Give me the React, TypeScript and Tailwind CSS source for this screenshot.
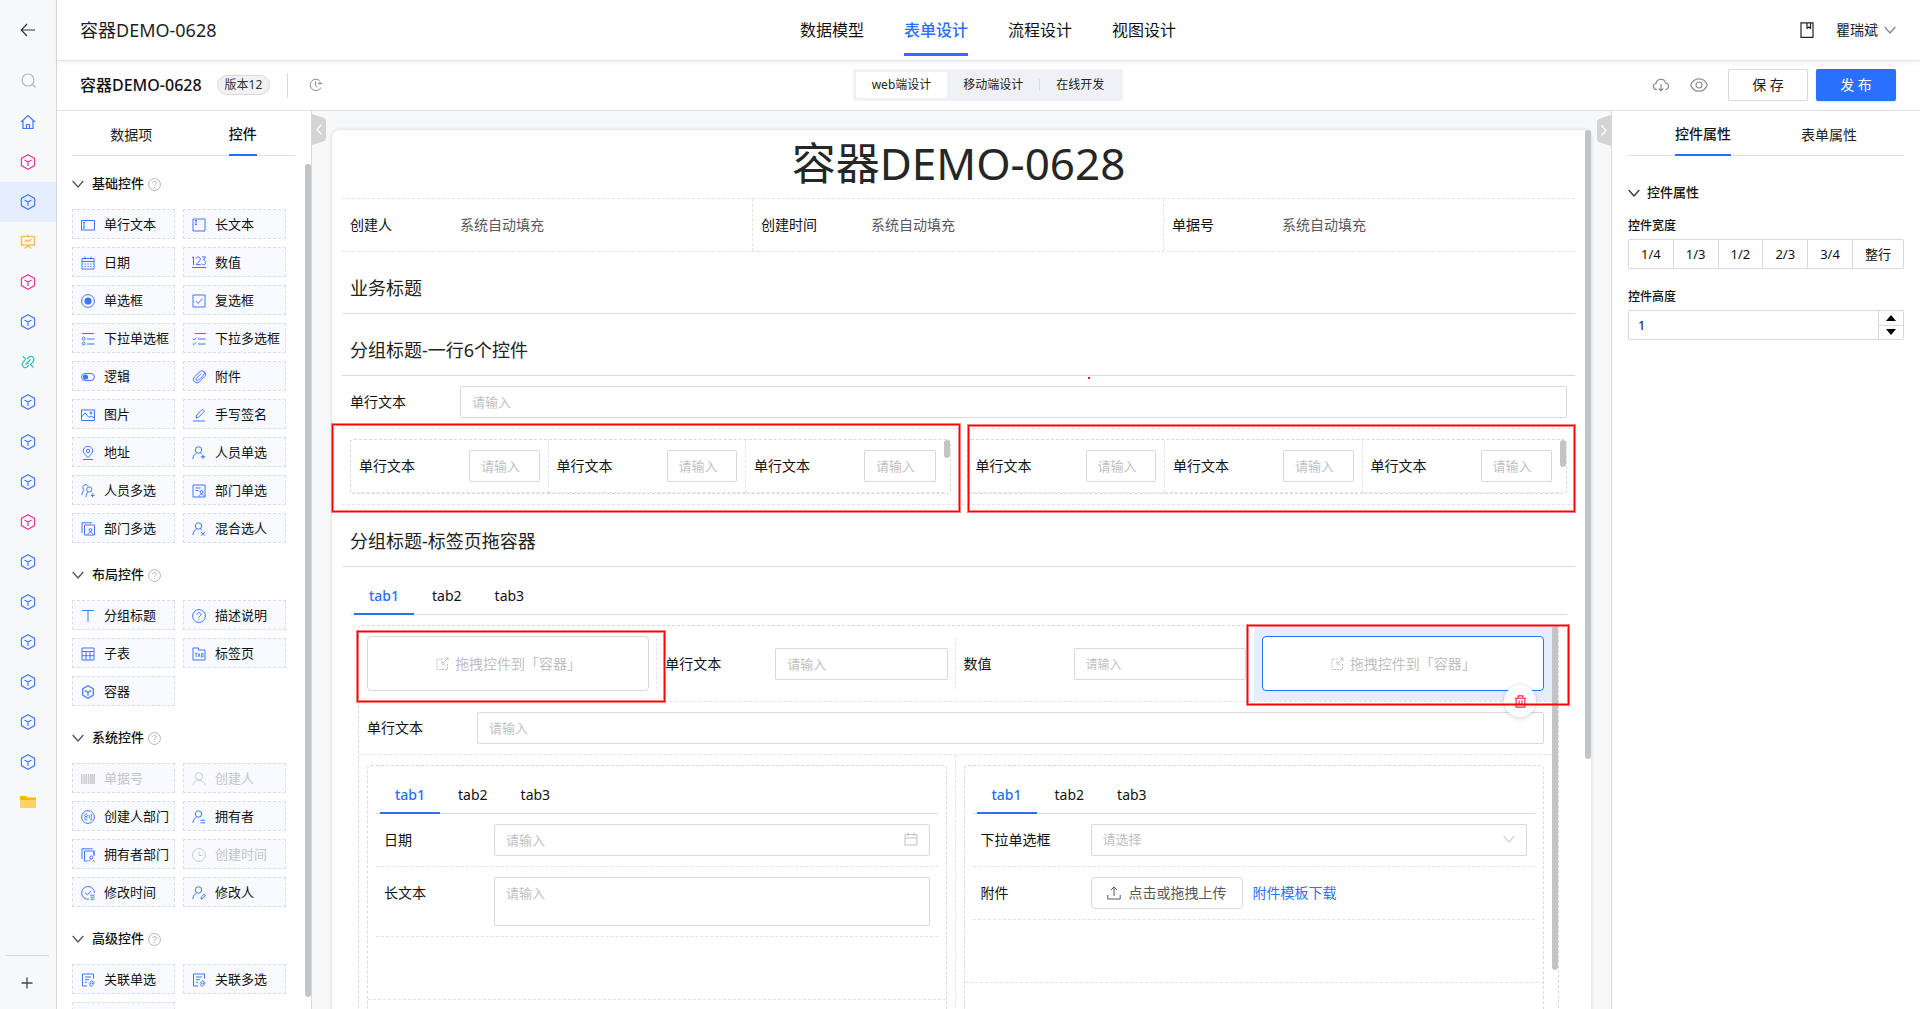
import { useId, type ReactNode } from "react";

/* ---------- icons ---------- */

function Svg({ size = 14, box = 14, w = 1, className = "", children }: { size?: number; box?: number; w?: number; className?: string; children: ReactNode }) {
  return (
    <svg width={size} height={size} viewBox={`0 0 ${box} ${box}`} fill="none" stroke="currentColor" strokeWidth={w} className={`shrink-0 ${className}`} aria-hidden="true">
      {children}
    </svg>
  );
}

const person = (
  <>
    <circle cx="6.5" cy="4" r="3.2" />
    <path d="M4.6 7C2.6 8 1.2 10 .8 13" />
  </>
);

const glyphs: Record<string, ReactNode> = {
  input: (<><path d="M.5 2.5h13v9.500H.5z" /><path d="M3 4.500v5.500M2 4.500h2M2 10h2" /></>),
  textarea: (<><path d="M1 1h12v12H1z" /><path d="M4 2.500v4M3 2.500h2M3 6.500h2" /></>),
  date: (<><path d="M1 2.500h12v10.500H1zM1 5.500h12M4 .5v3M10 .5v3" /><path d="M3.500 8h1.500M6.300 8h1.500M9 8h1.500M3.500 10.500h1.500M6.300 10.500h1.500M9 10.500h1.500" /></>),
  number: (<><path d="M0 1.500 1.500.8V9M4 2.800C4.300.3 8.300.3 8.300 3 8.300 5 5.500 6.800 4.200 8.600H8.800M10 .9h3.500L11.500 4c2.900.2 2.500 4.800.2 4.800-.9 0-1.600-.4-1.900-1.200" /><path d="M0 11.500h14" /></>),
  radio: (<><circle cx="7" cy="7" r="6.400" /><circle cx="7" cy="7" r="3.600" fill="currentColor" stroke="none" /></>),
  check: (<><path d="M1 1h12v12H1z" /><path d="m3.800 7 2.400 2.400 4.200-4.600" /></>),
  selectOne: (<><path d="M1 1.500h12M6 7h7.500M6 12h7.500" /><circle cx="2.700" cy="6.600" r="1.400" /><circle cx="2.700" cy="11.500" r="1.400" /></>),
  selectMany: (<><path d="M3 1.500h11M6 7h7.500M6 12h7.500" /><path d="m.8 6.800 1.200 1.200 2-2.300M.8 11.500 2 12.700l2-2.300" /></>),
  toggle: (<><rect x=".6" y="3.500" width="12.800" height="7" rx="3.500" /><circle cx="4.500" cy="7" r="2.600" fill="currentColor" stroke="none" /></>),
  clip: <path d="M12.800 6.500 7.500 11.800a3.500 3.500 0 0 1-5-5L8 1.500a2.500 2.500 0 0 1 3.600 3.600L6.500 10.200a1.400 1.400 0 0 1-2-2l4.700-4.700M12.800 6.500a3 3 0 0 0-1-5" />,
  image: (<><path d="M.5 2h13v10.500H.5zM.5 9l3.500-4 4 4.500L10 8l3.500 2" /><circle cx="10" cy="5" r="1" /></>),
  pen: (<><path d="M4 10l.6-2.800L10.500 1.200l2 2-6 6zM1 13h12" /></>),
  pin: (<><path d="M7 11.500C4.200 8.800 2.300 7 2.300 4.900a4.700 4.700 0 0 1 9.400 0C11.700 7 9.800 8.800 7 11.500zM2 13.500h10" /><circle cx="7" cy="5" r="1.700" /></>),
  userAdd: (<>{person}<path d="M11 8.500v4.500M8.700 10.800h4.600M8.500 6.800 9.500 8" /></>),
  usersAdd: (<><path d="M3.300 5.800A2.700 2.700 0 1 1 7 2.500M3.300 5.800C2 7 1.200 8.500 1 11" /><circle cx="8.300" cy="5.500" r="2.600" /><path d="M7 7.800C5.800 9 5.200 10.500 5 13M11.700 9.300v4M9.700 11.300h4" /></>),
  dept: (<><path d="M1 1h12v12H1zM3.500 4h5M3.500 6.500h3" /><circle cx="9.500" cy="8" r="1.500" /><path d="M7 12.500c.3-3 4.700-3 5 0" /></>),
  depts: (<><path d="M3.500 3h10v10h-10zM1 11V.8h10" /><circle cx="9.500" cy="8" r="1.500" /><path d="M7 12.500c.3-3 4.700-3 5 0" /></>),
  mix: (<>{person}<path d="M8.500 6.800 10 8.500M9 10l4 3.500M13 10l-4 3.500" /></>),
  title: <path d="M1 1.500h12M7 1.500V13" />,
  help: (<><circle cx="7" cy="7" r="6.400" /><path d="M5 5.500c.2-2.500 4-2.300 4 0C9 7 7 6.900 7 8.500M7 9.700v1.100" /></>),
  table: <path d="M1 1h12v12H1zM1 4.500h12M1 8.700h12M5 4.500V13M9 4.500V13" />,
  tabs: (<><path d="M1 13V1h5.500v2H13v10z" /><path d="M3 6.500h2.400M4.200 6.500V10M6 10l1-3.500L8 10M9.500 6.500V10h1.600V6.500z" strokeWidth=".8" /></>),
  cube: <path d="m7 .8 5.300 3v6.400L7 13.200l-5.300-3V3.800zM3.800 5.500 7 7.300l3.200-1.800M7 7.300v3.500" strokeWidth="1.200" />,
  barcode: <path d="M.7 2v10M3 2v10M5.200 2v10M7.500 2v10M9.700 2v10M11.500 2v10M13.300 2v10" strokeWidth="1.500" />,
  user: (<><circle cx="7" cy="4.300" r="3.600" /><path d="M.8 13.300C1.500 10 4 8.300 7 8.300s5.500 1.700 6.200 5" /></>),
  create: (<><circle cx="7" cy="7" r="6.400" /><path d="m3 6 2-2.500L7 6M4 6.500v3.300h2.500M4 6.500h2v1.700M8.300 5v3.500M10.300 3.800V10H9" strokeWidth=".8" /></>),
  owner: (<>{person}<path d="M8.500 10.300h4.500M8.500 12.800h4.500" /></>),
  ownerDept: (<><path d="M6.500 13H3.500V3h9.500v5M1 11V.8h10.500M13 3v4" /><circle cx="10.300" cy="9.500" r="1.500" /><path d="M8 13.500c.3-1.500 1-2.500 2.300-2.500M12 12l1.500 1.500" /></>),
  clock: (<><circle cx="7" cy="7" r="6.400" /><path d="M7 3.500V7.500h3.500" /></>),
  modTime: (<><path d="M8 13.200A6.400 6.400 0 1 1 13.400 7" /><path d="m4 6.500 2.500 2.300L10 5M9.500 9.200h4M9.500 11.200h4M9.500 13.200h4" /></>),
  modUser: (<>{person}<path d="m9 13 .3-1.800 2.700-3 1.600 1.300-2.700 3z" /></>),
  relation: (<><path d="M6 13H1.500V1h11v4.500M4 4h6M4 6.700h4M4 9.300h2" /><path d="m8 10.500 2-2.300a1.300 1.300 0 0 1 2 1.600l-1 1.200M12.800 9.500c1 1-2.300 4-3 3.700a1.300 1.300 0 0 1-.6-2.200l1-1.200" /></>),
};

function RailCube() {
  return (
    <Svg size={16} box={16} w={1.200}>
      <path d="m8 .7 6.600 3.700v7.200L8 15.300l-6.600-3.700V4.400zM4.500 6 8 8l3.500-2M8 8v4" />
    </Svg>
  );
}

function Chevron({ className = "" }: { className?: string }) {
  return (
    <Svg size={12} box={12} w={1.300} className={className}>
      <path d="m.7 3 5.300 6 5.300-6" />
    </Svg>
  );
}

/* ---------- navigation rail ---------- */

const BLUE = "text-[#4378ff]";
const PINK = "text-[#f5369c]";

const rail: { name: string; color: string; icon?: ReactNode; active?: boolean }[] = [
  { name: "应用 1", color: PINK },
  { name: "应用 2", color: BLUE, active: true },
  {
    name: "看板",
    color: "text-[#ffbd5c]",
    icon: (<Svg size={16} box={16} w={1.500}><path d="M1.500 2.500h13v8.500h-13zM8 .5v2M8 11v2M4.500 14.500 8 12l3.500 2.500M4.500 8 7 6l1.500 1.500L11.500 5" /></Svg>),
  },
  { name: "应用 3", color: PINK },
  { name: "应用 4", color: BLUE },
  {
    name: "链接",
    color: "text-[#3dbdb4]",
    icon: (<Svg size={14} w={1.200}><path d="M4 5 2 7.200C-.5 10.500 3 14 6 12l2-2M10 9l2-2.200C14.500 3.500 11 0 8 2L6 4M2 1.500l3 3M4.500 9.500l5-5M9 9l3.500 3.500M6 7.500 7.500 9" /></Svg>),
  },
  { name: "应用 5", color: BLUE },
  { name: "应用 6", color: BLUE },
  { name: "应用 7", color: BLUE },
  { name: "应用 8", color: PINK },
  { name: "应用 9", color: BLUE },
  { name: "应用 10", color: BLUE },
  { name: "应用 11", color: BLUE },
  { name: "应用 12", color: BLUE },
  { name: "应用 13", color: BLUE },
  { name: "应用 14", color: BLUE },
  {
    name: "文件夹",
    color: "text-[#ffc53d]",
    icon: (
      <svg width="16" height="14" viewBox="0 0 16 14" aria-hidden="true">
        <path d="M1 1h5l1.500 1.500H15a1 1 0 0 1 1 1V7H0V2a1 1 0 0 1 1-1z" fill="#ffb800" />
        <path d="M0 5h16v7a1 1 0 0 1-1 1H1a1 1 0 0 1-1-1z" fill="#ffd266" />
      </svg>
    ),
  },
];

function Rail() {
  return (
    <nav className="flex w-[57px] shrink-0 flex-col border-r border-[#d9d9d9] bg-[#f7f8fa]">
      <button aria-label="返回" className="flex h-[60px] w-14 shrink-0 items-center justify-center text-[#333]">
        <Svg size={16} box={16} w={1.200}><path d="M15 8H1.500M7 2 1.200 8 7 14" /></Svg>
      </button>
      <button aria-label="搜索" className="flex h-[42px] w-14 shrink-0 items-center justify-center pb-[2px] text-[#b8b8b8]">
        <Svg size={15} box={15} w={1.200}><circle cx="7" cy="7" r="6" /><path d="m11.500 11.500 3 3" /></Svg>
      </button>
      <button aria-label="首页" className={`flex h-10 w-14 shrink-0 items-center justify-center ${BLUE}`}>
        <Svg size={16} box={16} w={1.200}><path d="m1 8 7-6.500L15 8M3 6.500v8h10v-8M6.500 14.500v-4h3v4" /></Svg>
      </button>
      {rail.map((r) => (
        <button key={r.name} aria-label={r.name} className={`flex h-10 w-14 shrink-0 items-center justify-center ${r.color} ${r.active ? "bg-[#e4eeff]" : ""}`}>
          {r.icon ?? <RailCube />}
        </button>
      ))}
      <div className="mt-auto mb-2 ml-[5px] mr-[7px] flex h-[46px] shrink-0 items-center justify-center border-t border-[#d9d9d9] pt-2">
        <button aria-label="添加" className="text-[#444]">
          <Svg size={12} box={12} w={1.300}><path d="M6 .5v11M.5 6h11" /></Svg>
        </button>
      </div>
    </nav>
  );
}

/* ---------- headers ---------- */

function TopBar() {
  return (
    <header className="relative z-10 grid h-[61px] shrink-0 grid-cols-[1fr_auto_1fr] items-center border-b border-[#e4e5e7] bg-white pl-[23px] pr-6 shadow-[0_2px_6px_rgba(0,0,0,0.05)]">
      <div className="text-lg text-[#1f1f1f]">容器DEMO-0628</div>
      <nav className="flex h-full gap-10 text-base">
        {["数据模型", "表单设计", "流程设计", "视图设计"].map((t) => (
          <a key={t} href="#" className={`mb-1 flex items-center border-b-[3px] pt-[6px] ${t === "表单设计" ? "border-[#2970ff] font-medium text-[#2970ff]" : "border-transparent text-[#111]"}`}>
            {t}
          </a>
        ))}
      </nav>
      <div className="flex items-center justify-end">
        <button aria-label="文档" className="mr-[21px] text-[#222]">
          <Svg size={16} box={16} w={1.200}><path d="M2 .8h12v14.500H2zM8 .8v5.500l1.800-1.300L11.500 6.300V.8" /></Svg>
        </button>
        <button className="flex items-center gap-[6px] text-sm text-[#222]">
          瞿瑞斌
          <Chevron className="text-[#888]" />
        </button>
      </div>
    </header>
  );
}

function ToolBar() {
  return (
    <div className="grid h-[50px] shrink-0 grid-cols-[1fr_auto_1fr] items-center border-b border-[#e0e1e3] bg-white pb-[1px] pl-[23px] pr-6">
      <div className="flex items-center">
        <h1 className="text-base font-medium text-[#111]">容器DEMO-0628</h1>
        <span className="ml-[15px] flex h-5 items-center rounded-full border border-[#d9d9d9] bg-[#f2f2f2] px-[7px] text-xs text-[#333]">版本12</span>
        <span className="ml-[17px] h-[25px] w-px bg-[#d9d9d9]" />
        <button aria-label="历史" className="ml-[21px] text-[#8c8c8c]">
          <Svg size={14}><path d="M10.500 2.500A5.700 5.700 0 1 0 12 9.500M6.500 3.500v4l2 1.500M9 5.500h4.500M11 3.500v3" /></Svg>
        </button>
      </div>
      <div className="flex h-8 items-stretch rounded-xs bg-[#eff1f6] p-[3px] text-xs text-[#222]">
        <button className="rounded-xs bg-white px-4">web端设计</button>
        <button className="px-4">移动端设计</button>
        <span className="my-[7px] w-px bg-[#d9dbe0]" />
        <button className="px-4">在线开发</button>
      </div>
      <div className="flex items-center justify-end text-sm">
        <button aria-label="导出" className="mr-5 text-[#8c8c8c]">
          <Svg size={18} box={18} w={1.200}><path d="M5 13.500C.5 13.300.2 8 4 7.500 4.500 2.500 12.500 1.500 13.500 7c4 .3 4.200 6.300-.3 6.500M9 8v6.500M6.800 12.500 9 14.800l2.200-2.300" /></Svg>
        </button>
        <button aria-label="预览" className="mr-5 text-[#8c8c8c]">
          <Svg size={18} box={18} w={1.200}><path d="M.8 9C3.500.8 14.500.8 17.200 9 14.500 17.200 3.500 17.200.8 9z" /><circle cx="9" cy="9" r="3" /></Svg>
        </button>
        <button className="h-8 w-20 rounded-xs border border-[#d9d9d9] bg-white text-[#222]">保 存</button>
        <button className="ml-2 h-8 w-20 rounded-xs bg-[#2970ff] text-white shadow-sm">发 布</button>
      </div>
    </div>
  );
}

/* ---------- left palette ---------- */

type Item = [icon: string, label: string, disabled?: boolean];

const groups: { name: string; items: Item[] }[] = [
  {
    name: "基础控件",
    items: [
      ["input", "单行文本"], ["textarea", "长文本"], ["date", "日期"], ["number", "数值"],
      ["radio", "单选框"], ["check", "复选框"], ["selectOne", "下拉单选框"], ["selectMany", "下拉多选框"],
      ["toggle", "逻辑"], ["clip", "附件"], ["image", "图片"], ["pen", "手写签名"],
      ["pin", "地址"], ["userAdd", "人员单选"], ["usersAdd", "人员多选"], ["dept", "部门单选"],
      ["depts", "部门多选"], ["mix", "混合选人"],
    ],
  },
  { name: "布局控件", items: [["title", "分组标题"], ["help", "描述说明"], ["table", "子表"], ["tabs", "标签页"], ["cube", "容器"]] },
  {
    name: "系统控件",
    items: [
      ["barcode", "单据号", true], ["user", "创建人", true], ["create", "创建人部门"], ["owner", "拥有者"],
      ["ownerDept", "拥有者部门"], ["clock", "创建时间", true], ["modTime", "修改时间"], ["modUser", "修改人"],
    ],
  },
  { name: "高级控件", items: [["relation", "关联单选"], ["relation", "关联多选"], ["", ""]] },
];

function Palette() {
  return (
    <aside className="relative flex w-[255px] shrink-0 flex-col overflow-hidden border-r border-[#d9d9d9] bg-white">
      <div className="ml-[15px] mr-4 flex h-[45px] shrink-0 justify-around border-b border-[#e0e0e0] text-sm">
        <button className="pt-[3px] text-[#222]">数据项</button>
        <button className="-mb-px border-b-2 border-[#2970ff] pt-[3px] font-medium text-[#111]">控件</button>
      </div>
      <div className="flex flex-col gap-[22px] pl-[15px] pr-[25px] pt-[18px]">
        {groups.map((g) => (
          <section key={g.name}>
            <div className="mb-[15px] flex h-5 items-center">
              <Chevron className="text-[#555]" />
              <h2 className="ml-2 text-[13px] font-medium text-[#111]">{g.name}</h2>
              <Svg size={13} box={14} className="ml-1 text-[#b0b0b0]">{glyphs.help}</Svg>
            </div>
            <div className="grid grid-cols-2 gap-2">
              {g.items.map(([icon, label, off]) => (
                <button
                  key={label}
                  disabled={off}
                  className={`flex h-[30px] items-center gap-[9px] whitespace-nowrap border border-dashed border-[#d7deeb] bg-[#f8faff] pl-2 pt-[1px] text-[13px] ${off ? "text-[#c4c4c4]" : "text-[#111]"}`}
                >
                  <Svg className={off ? "text-[#cccccc]" : "text-[#3f74ff]"}>{glyphs[icon]}</Svg>
                  {label}
                </button>
              ))}
            </div>
          </section>
        ))}
      </div>
      <div className="absolute right-0 top-[53px] bottom-3 w-[6px] rounded-full bg-[#c3c4c6]" />
    </aside>
  );
}

/* ---------- form canvas ---------- */

const ctl = "w-full min-w-0 rounded-xs border border-[#d9d9d9] bg-white px-[11px] text-[13px] text-[#222] outline-none placeholder:text-[#bfbfbf]";

function Field({ label, className = "", children }: { label: string; className?: string; children: (id: string) => ReactNode }) {
  const id = useId();
  return (
    <div className={`flex min-w-0 px-2 py-[10px] ${className}`}>
      <label htmlFor={id} className="w-[110px] shrink-0 text-sm leading-8 text-[#111]">{label}</label>
      <div className="min-w-0 flex-1">{children(id)}</div>
    </div>
  );
}

function TextField({ label = "单行文本", className = "", small = false }: { label?: string; className?: string; small?: boolean }) {
  return (
    <Field label={label} className={className}>
      {(id) => <input id={id} placeholder="请输入" className={`block h-8 ${ctl} ${small ? "placeholder:text-xs" : ""}`} />}
    </Field>
  );
}

const dash = "border-dashed border-[#e3e3e3]";
const box = "rounded border border-dashed border-[#d9d9d9]";

function Tabs() {
  return (
    <div role="tablist" className="mx-2 flex h-12 gap-[3px] border-b border-[#d9d9d9] pl-1 text-sm">
      {["tab1", "tab2", "tab3"].map((t, i) => (
        <button
          key={t}
          role="tab"
          aria-selected={i === 0}
          className={`-mb-px border-b-2 px-[15px] pt-3 ${i === 0 ? "border-[#2970ff] font-medium text-[#2970ff]" : "border-transparent text-[#111]"}`}
        >
          {t}
        </button>
      ))}
    </div>
  );
}

function Marker({ className }: { className: string }) {
  return <div className={`pointer-events-none absolute z-20 border border-[#ff0000] shadow-[0_0_0_1px_rgba(255,0,0,0.5),inset_0_0_0_1px_rgba(255,0,0,0.5)] ${className}`} />;
}

function ScrollBox({ thumb }: { thumb: string }) {
  return (
    <div className={`relative pr-[6px] ${box}`}>
      <div className="grid grid-cols-3">
        <TextField className={`border-b border-r ${dash}`} />
        <TextField className={`border-b border-r ${dash}`} />
        <TextField className={`border-b ${dash}`} />
      </div>
      <div className={`absolute right-0 top-0 w-[6px] rounded-full bg-[#c3c4c6] ${thumb}`} />
    </div>
  );
}

function DropZone({ selected = false }: { selected?: boolean }) {
  return (
    <div className={`flex h-[55px] w-full items-center justify-center gap-[6px] rounded border bg-white text-sm text-[#bfbfbf] ${selected ? "border-[#2970ff]" : "border-[#d9d9d9]"}`}>
      <Svg><path d="M7.500 2H2v10.500h10.500V7" strokeDasharray="2 1" /><path d="M13 1 8 6M7 4v3.200h3.200M10.500 1H13v2.500" /></Svg>
      <span>拖拽控件到「容器」</span>
    </div>
  );
}

function SectionTitle({ children }: { children: ReactNode }) {
  return <h3 className="flex h-[62px] items-center border-b border-[#d9d9d9] px-2 pt-[10px] text-lg text-[#222]">{children}</h3>;
}

function Canvas() {
  return (
    <main className="relative min-w-0 flex-1 overflow-hidden bg-[#f7f8fa] px-5 pt-[19px]">
      <button aria-label="收起左侧" className="absolute left-0 top-[3px]">
        <svg width="14" height="31" viewBox="0 0 14 31" aria-hidden="true">
          <path d="M0 0 11 3.500q3 1 3 4v16q0 3-3 4L0 31z" fill="#d4d4d4" />
          <path d="M9.500 10.500 5 15.500l4.500 5" fill="none" stroke="#fff" strokeWidth="1.300" />
        </svg>
      </button>
      <button aria-label="收起右侧" className="absolute right-0 top-1">
        <svg width="14" height="31" viewBox="0 0 14 31" aria-hidden="true">
          <path d="M14 0 3 3.500q-3 1-3 4v16q0 3 3 4L14 31z" fill="#d4d4d4" />
          <path d="m4.500 10.500 4.500 5-4.500 5" fill="none" stroke="#fff" strokeWidth="1.300" />
        </svg>
      </button>

      <div className="relative min-h-full rounded-t-lg bg-white pl-[10px] pr-4 shadow-[0_0_4px_rgba(0,0,0,0.14)]">
        <div className="absolute right-0 top-0 h-[629px] w-[6px] rounded-full bg-[#c3c4c6]" />
        <h2 className="flex h-[68px] items-center justify-center pb-[2px] text-[44px] leading-none text-[#262626]">容器DEMO-0628</h2>

        <dl className={`grid h-[54px] grid-cols-3 border-y text-sm ${dash}`}>
          {["创建人", "创建时间", "单据号"].map((t, i) => (
            <div key={t} className={`flex items-center px-2 ${i < 2 ? `border-r ${dash}` : ""}`}>
              <dt className="w-[110px] text-[#111]">{t}</dt>
              <dd className="text-[#595959]">系统自动填充</dd>
            </div>
          ))}
        </dl>

        <SectionTitle>业务标题</SectionTitle>
        <SectionTitle>分组标题-一行6个控件</SectionTitle>

        <div className="relative">
          <TextField className={`border-b ${dash}`} />
          <span className="absolute left-[60.500%] top-[1px] h-[2px] w-[2px] bg-[#ff0f0f]" />
        </div>

        <div className={`grid grid-cols-2 border-b ${dash}`}>
          <div className="relative px-2 py-[10px]">
            <ScrollBox thumb="h-[18px]" />
            <Marker className="-bottom-2 -left-[10px] -right-px -top-[5px]" />
          </div>
          <div className="relative px-2 py-[10px]">
            <ScrollBox thumb="h-[27px]" />
            <Marker className="-bottom-2 -top-1 left-[9px] right-0" />
          </div>
        </div>

        <SectionTitle>分组标题-标签页拖容器</SectionTitle>
        <Tabs />

        <div className={`relative mx-4 mt-[10px] pr-[6px] ${box}`}>
          <div className={`flex items-stretch border-b ${dash}`}>
            <div className="relative flex flex-1 basis-0 items-center px-2 py-[10px]">
              <DropZone />
              <Marker className="-bottom-px -left-[2px] -right-2 top-[5px]" />
            </div>
            <span className={`my-3 -ml-px border-l ${dash}`} />
            <TextField className="flex-1 basis-0 self-center" />
            <span className={`my-3 -ml-px border-l ${dash}`} />
            <TextField label="数值" small className="flex-1 basis-0 self-center" />
            <div className="relative flex flex-1 basis-0 items-center bg-[#e4eeff] px-2 py-[10px]">
              <DropZone selected />
              <button aria-label="删除" className="absolute -bottom-4 right-4 z-10 flex h-8 w-8 items-center justify-center rounded-full bg-white text-[#f5224b] shadow-[0_1px_5px_rgba(0,0,0,0.2)]">
                <Svg size={13} w={1.200}><path d="M.8 3.500h12.400M4.500 3.500V1h5v2.500M2.300 3.500V13h9.400V3.500M5.500 6v4.800M8.500 6v4.800" /></Svg>
              </button>
              <Marker className="-bottom-1 -left-[7px] -right-[17px] -top-px" />
            </div>
          </div>
          <TextField className={`border-b ${dash}`} />
          <div className="grid grid-cols-2">
            <div className={`border-r px-2 pt-[10px] ${dash}`}>
              <div className={`h-full ${box}`}>
                <Tabs />
                <Field label="日期" className={`mx-2 border-b ${dash}`}>
                  {(id) => (
                    <div className="relative">
                      <input id={id} placeholder="请输入" className={`block h-8 ${ctl}`} />
                      <Svg size={14} className="absolute right-3 top-2 text-[#bfbfbf]"><path d="M1 2.500h12v10.500H1zM1 6h12M4 .5v3.500M10 .5v3.500" /></Svg>
                    </div>
                  )}
                </Field>
                <Field label="长文本" className={`mx-2 border-b ${dash}`}>
                  {(id) => <textarea id={id} placeholder="请输入" className={`block h-[49px] resize-none py-1 leading-[22px] ${ctl}`} />}
                </Field>
                <div className={`h-[63px] border-b ${dash}`} />
                <div className="h-24" />
              </div>
            </div>
            <div className="px-2 pt-[10px]">
              <div className={`h-full ${box}`}>
                <Tabs />
                <Field label="下拉单选框" className={`mx-2 border-b ${dash}`}>
                  {(id) => (
                    <div className="relative">
                      <select id={id} defaultValue="" className="block h-8 w-full appearance-none rounded-xs border border-[#d9d9d9] bg-white px-[11px] text-[13px] text-[#bfbfbf] outline-none">
                        <option value="">请选择</option>
                      </select>
                      <Chevron className="pointer-events-none absolute right-3 top-[9px] text-[#d4d4d4]" />
                    </div>
                  )}
                </Field>
                <Field label="附件" className={`mx-2 border-b ${dash}`}>
                  {(id) => (
                    <div className="flex items-center text-sm">
                      <button id={id} className="flex h-8 items-center gap-2 rounded border border-[#d9d9d9] bg-white px-[15px] text-[#595959]">
                        <Svg><path d="M7 10V1M4 4l3-3 3 3M.8 9v4h12.400V9" /></Svg>
                        点击或拖拽上传
                      </button>
                      <a href="#" className="ml-[10px] text-[#2970ff]">附件模板下载</a>
                    </div>
                  )}
                </Field>
                <div className={`h-[63px] border-b ${dash}`} />
              </div>
            </div>
          </div>
          <div className="absolute right-0 top-0 h-[344px] w-[6px] rounded-full bg-[#c3c4c6]" />
        </div>
      </div>
    </main>
  );
}

/* ---------- right inspector ---------- */

function Inspector() {
  return (
    <aside className="w-[309px] shrink-0 border-l border-[#d9d9d9] bg-white px-4 text-[#111]">
      <div className="flex h-[45px] justify-center gap-[70px] border-b border-[#e0e0e0] text-sm">
        <button className="-mb-px border-b-2 border-[#2970ff] pt-[3px] font-medium">控件属性</button>
        <button className="pt-[3px] text-[#222]">表单属性</button>
      </div>
      <div className="mt-[27px] flex h-5 items-center">
        <Chevron className="text-[#333]" />
        <h2 className="ml-[7px] text-[13px] font-medium">控件属性</h2>
      </div>
      <div id="width-label" className="mt-[13px] text-xs font-medium leading-5">控件宽度</div>
      <div role="group" aria-labelledby="width-label" className="mt-[3px] flex h-[30px] rounded-xs border border-[#d9d9d9] text-[13px]">
        {["1/4", "1/3", "1/2", "2/3", "3/4", "整行"].map((t, i) => (
          <button key={t} className={`flex-auto pt-[1px] ${i > 0 ? "border-l border-[#d9d9d9]" : ""}`}>{t}</button>
        ))}
      </div>
      <label htmlFor="height" className="mt-[18px] block text-xs font-medium leading-5">控件高度</label>
      <div className="mt-[3px] flex h-[30px] rounded-xs border border-[#d9d9d9]">
        <input id="height" defaultValue="1" inputMode="numeric" className="min-w-0 flex-1 px-[9px] pt-[2px] text-[13px] outline-none" />
        <div className="flex w-[25px] flex-col border-l border-[#d9d9d9]">
          <button aria-label="增加" className="flex flex-1 items-center justify-center border-b border-[#d9d9d9]">
            <svg width="10" height="6" viewBox="0 0 10 6" aria-hidden="true"><path d="M5 0 10 6H0z" fill="#000" /></svg>
          </button>
          <button aria-label="减少" className="flex flex-1 items-center justify-center">
            <svg width="10" height="6" viewBox="0 0 10 6" aria-hidden="true"><path d="M0 0h10L5 6z" fill="#000" /></svg>
          </button>
        </div>
      </div>
    </aside>
  );
}

export default function App() {
  return (
    <div className="flex h-screen overflow-hidden bg-white font-['Noto_Sans','Noto_Sans_CJK_SC',sans-serif]">
      <Rail />
      <div className="flex min-w-0 flex-1 flex-col">
        <TopBar />
        <ToolBar />
        <div className="flex min-h-0 flex-1">
          <Palette />
          <Canvas />
          <Inspector />
        </div>
      </div>
    </div>
  );
}
